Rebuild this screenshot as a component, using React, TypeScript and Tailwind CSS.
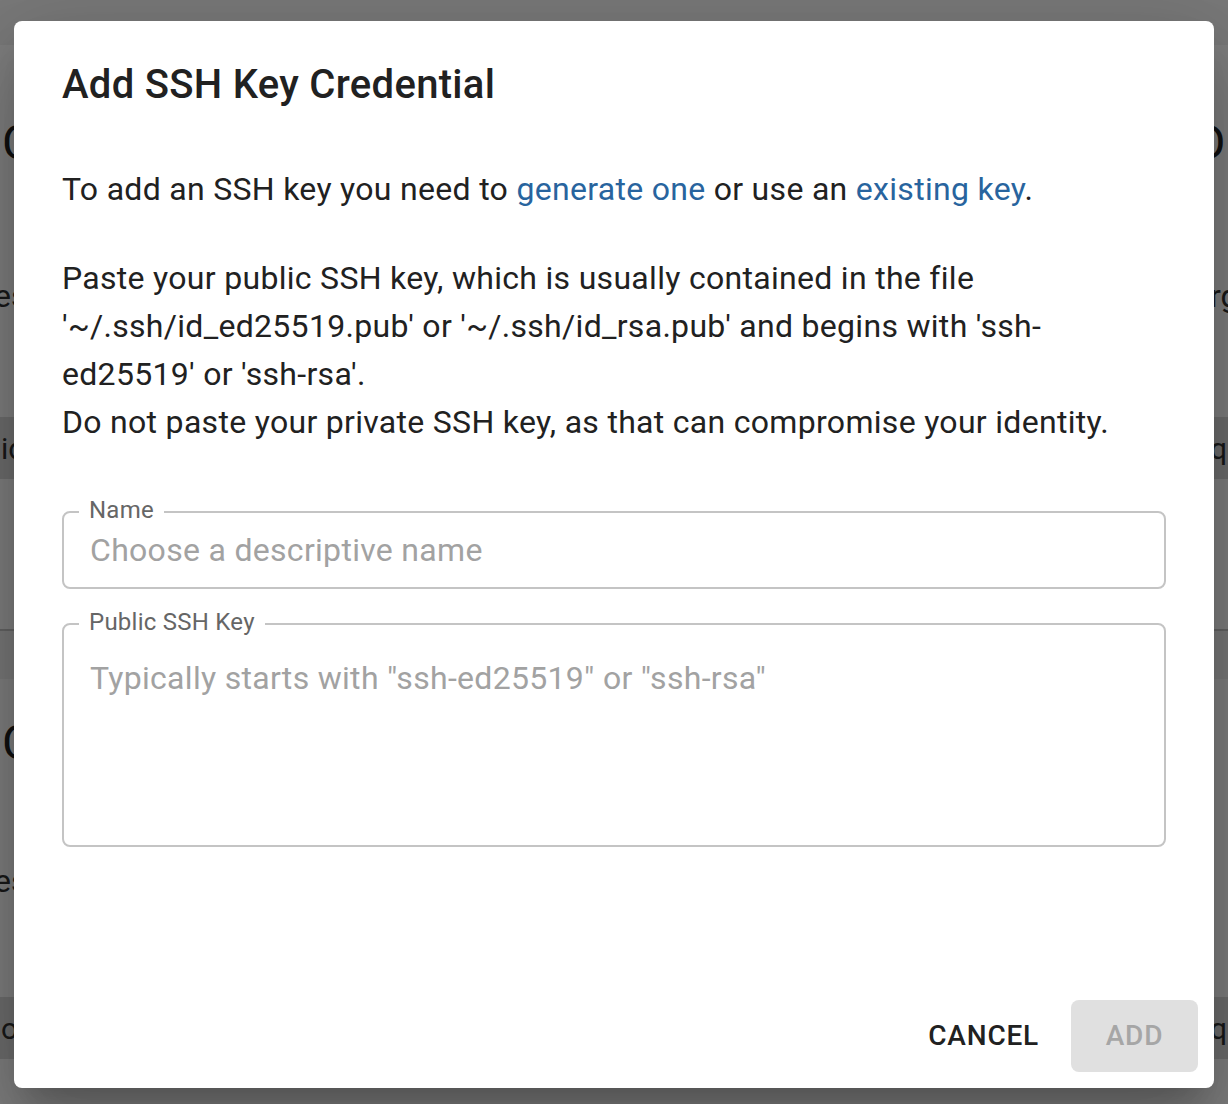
import React from "react";

const FONT = { fontFamily: "Roboto, 'Liberation Sans', sans-serif" };

// backdrop page content, mostly covered by the dialog
function BgCard({ top, title, titleRight, desc, descRight, band, bandRight, gapTitle, gapBand }: {
  top: string; title: string; titleRight: string; desc: string; descRight: string;
  band: string; bandRight: string; gapTitle: string; gapBand: string;
}) {
  return (
    <div className={`bg-white border-b-2 border-[#c8c8c8] ${top}`}>
      <div className="grid grid-cols-[1194px_1fr] whitespace-nowrap overflow-hidden text-[48px] leading-[56px] text-[#222]">
        <span className="pl-[2px]">{title}</span>
        <span>{titleRight}</span>
      </div>
      <div className={`grid grid-cols-[1212px_1fr] whitespace-nowrap overflow-hidden text-[32px] leading-[40px] text-[#333] ${gapTitle}`}>
        <span className="-ml-[6px]">{desc}</span>
        <span className="-ml-[2px]">{descRight}</span>
      </div>
      <div className={`grid grid-cols-[1212px_1fr] whitespace-nowrap overflow-hidden bg-[#dcdcdc] h-[62px] items-center text-[30px] text-[#333] ${gapBand}`}>
        <span className="pl-[1px]">{band}</span>
        <span className="-ml-[2px]">{bandRight}</span>
      </div>
      <div className="h-[150px]" />
    </div>
  );
}

function OutlinedField({ label, children, className }: { label: string; children: React.ReactNode; className: string }) {
  return (
    <div className={`relative border-2 border-[#c4c4c4] rounded-[8px] ${className}`}>
      <span className="absolute -top-[16px] left-[15px] px-[10px] bg-white text-[24px] leading-[26px] tracking-[0.25px] text-[#666]">
        {label}
      </span>
      {children}
    </div>
  );
}

export default function App() {
  return (
    <div className="relative w-[1228px] h-[1104px] overflow-hidden bg-[#f2f2f2]" style={FONT}>
      {/* page behind the modal */}
      <div className="pt-[45px] space-y-[48px]">
        <BgCard
          top="pt-[70px]"
          title="Credentials"
          titleRight="D"
          desc="es access tokens for repositories"
          descRight="rganizations"
          band="id_ed25519 SHA256:f3xq"
          bandRight="qe6Ti0ZL"
          gapTitle="mt-[105px]"
          gapBand="mt-[101px]"
        />
        <BgCard
          top="pt-[36px]"
          title="Certificates"
          titleRight=""
          desc="es signing keys for releases"
          descRight=""
          band="openpgp 4AE2 91B0"
          bandRight="q8ZK"
          gapTitle="mt-[90px]"
          gapBand="mt-[96px]"
        />
      </div>

      {/* backdrop */}
      <div className="absolute inset-0 bg-black/50" />

      {/* dialog */}
      <div className="absolute left-[14px] top-[21px] w-[1200px] h-[1067px] bg-white rounded-[8px] flex flex-col shadow-[0_22px_30px_-14px_rgba(0,0,0,0.2),0_48px_76px_6px_rgba(0,0,0,0.14),0_18px_92px_16px_rgba(0,0,0,0.12)]">
        <h2 className="px-[48px] pt-[32px] text-[40px] leading-[64px] font-medium tracking-[0.3px] text-[#212121]">
          Add SSH Key Credential
        </h2>

        <div className="px-[48px] text-[32px] leading-[48px] tracking-[0.3px] text-[#212121]">
          <p className="mt-[48px]">
            To add an SSH key you need to <a className="text-[#28649e]">generate one</a> or use an{" "}
            <a className="text-[#28649e]">existing key</a>.
          </p>
          <p className="mt-[41px]">
            Paste your public SSH key, which is usually contained in the file
            <br />
            '~/.ssh/id_ed25519.pub' or '~/.ssh/id_rsa.pub' and begins with 'ssh-
            <br />
            ed25519' or 'ssh-rsa'.
            <br />
            Do not paste your private SSH key, as that can compromise your identity.
          </p>

          <OutlinedField label="Name" className="mt-[65px] h-[78px] flex items-center">
            <input
              className="w-full h-full pl-[26px] pr-[26px] bg-transparent outline-none text-[32px] tracking-[0.3px] text-[#212121] placeholder:text-[#a2a2a2]"
              placeholder="Choose a descriptive name"
            />
          </OutlinedField>

          <OutlinedField label="Public SSH Key" className="mt-[34px] h-[224px]">
            <textarea
              className="w-full h-full resize-none pt-[30px] pl-[26px] pr-[26px] bg-transparent outline-none text-[32px] leading-[46px] tracking-[0.3px] text-[#212121] placeholder:text-[#a2a2a2]"
              placeholder={'Typically starts with "ssh-ed25519" or "ssh-rsa"'}
            />
          </OutlinedField>
        </div>

        <div className="mt-auto flex justify-end items-center gap-[16px] pr-[16px] pb-[16px]">
          <button className="h-[72px] px-[16px] text-[28px] font-medium uppercase tracking-[0.8px] text-[#212121] rounded-[8px]">
            Cancel
          </button>
          <button
            disabled
            className="h-[72px] w-[127px] px-[32px] text-[28px] font-medium uppercase tracking-[0.8px] text-[#a6a6a6] bg-[#e0e0e0] rounded-[8px]"
          >
            Add
          </button>
        </div>
      </div>
    </div>
  );
}
